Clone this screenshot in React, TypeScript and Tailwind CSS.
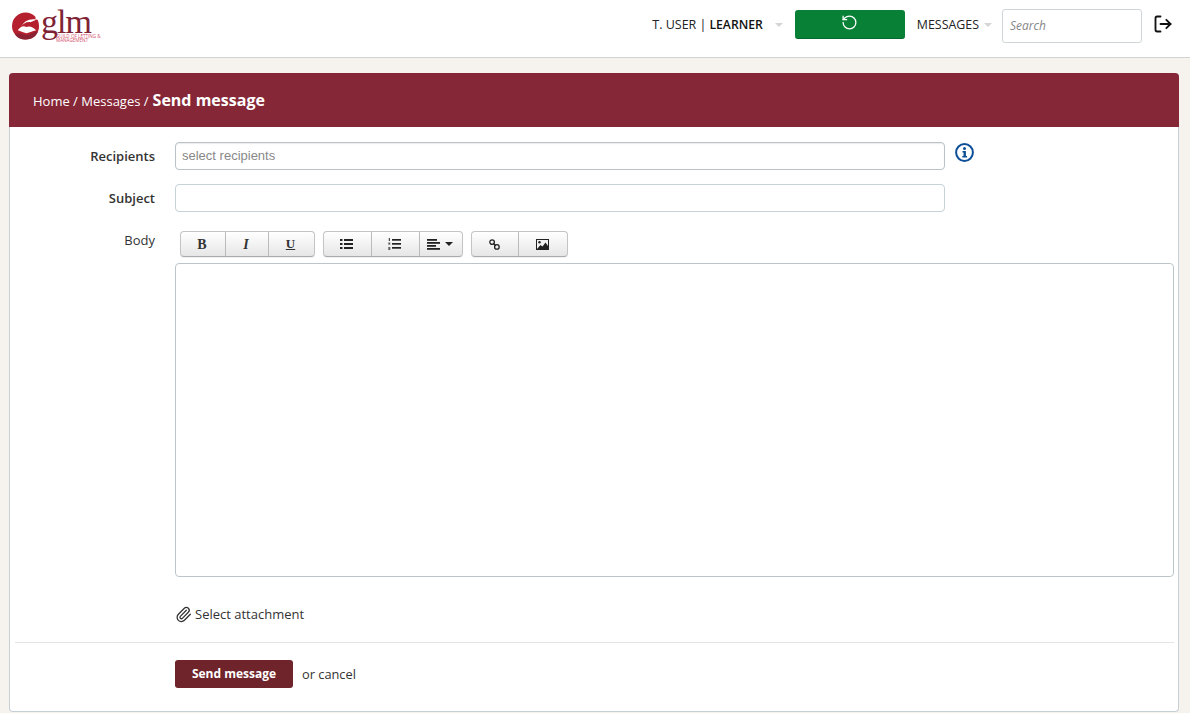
import { LogOut, Paperclip, RotateCcw } from "lucide-react";
import { ReactNode } from "react";

const Logo = () => (
  <div className="flex items-start">
    <svg width="28" height="30" viewBox="0 0 29 31" className="mt-[11px] ml-[12px]">
      <circle cx="14" cy="15.5" r="14" fill="#b5202f" />
      <path d="M25 3 L29 3 L29 9 L23 8.5 C17 8 12 11 9 17 C11 13 15 11 19 11.5 L24 9.5 Z" fill="#ffffff" />
      <path d="M6 20 C9 15.5 12 15 15 16.5 C18 15 22 16.5 25 20 C21 21 19 22 15 23 C11 22 9 21 6 20 Z" fill="#ffffff" />
      <path d="M3 24 C8 22 11 24 15 25 C19 24 23 22 27 21 C25 27 20 29.5 14 29.5 C9 29.5 5 27.5 3 24 Z" fill="#8a2233" />
    </svg>
    <div className="ml-[1px] flex flex-col">
      <span className="mt-[11px] h-[22px] font-['Liberation_Serif',serif] text-[34px] leading-[22px] tracking-[-1px] text-[#7f2234]">
        glm
      </span>
      <div className="ml-[15px] mt-[1px] font-['Open_Sans',sans-serif] text-[4.6px] leading-[4px] text-[#d2526c]">
        <div>GUILD OF LETTING &amp;</div>
        <div>MANAGEMENT</div>
      </div>
    </div>
  </div>
);

const Caret = () => (
  <span className="mt-[14px] h-0 w-0 border-x-[4px] border-t-[4px] border-x-transparent border-t-[#d5d5d5]" />
);

const Header = () => (
  <header className="flex h-[58px] items-start border-b border-[#d3d3d3] bg-white">
    <Logo />
    <div className="ml-auto flex items-start pt-[9px]">
      <span className="text-[12.5px] leading-[31px] text-[#222]">T. USER | </span>
      <span className="ml-[3px] text-[12.2px] font-semibold leading-[31px] text-[#111]">LEARNER</span>
      <span className="ml-[12px] flex">
        <Caret />
      </span>
      <button className="ml-[12px] mt-[1px] flex h-[29px] w-[110px] items-center justify-center rounded-[3px] border-b border-[#06682e] bg-[#088035]">
        <RotateCcw size={17} color="#ffffff" strokeWidth={1.8} className="-mt-[3px]" />
      </button>
      <span className="ml-[12px] text-[12.4px] leading-[31px] text-[#222]">MESSAGES</span>
      <span className="ml-[5px] flex">
        <Caret />
      </span>
      <div className="ml-[10px] flex h-[34px] w-[140px] items-center rounded-[3px] border border-[#cfd6da] px-[7px] text-[12px] italic text-[#888]">
        Search
      </div>
      <LogOut size={20} color="#111" strokeWidth={2.2} className="ml-[11px] mr-[17px] mt-[5px]" />
    </div>
  </header>
);

const Field = ({ label, bold, children }: { label: string; bold?: boolean; children: ReactNode }) => (
  <div className="flex">
    <label
      className={`w-[136px] shrink-0 text-right text-[13px] leading-[18px] text-[#333] ${
        bold ? "pt-[5px] font-semibold" : ""
      }`}
    >
      {label}
    </label>
    <div className="ml-[20px] min-w-0 flex-1">{children}</div>
  </div>
);

const ToolButton = ({ children, width }: { children: ReactNode; width: string }) => (
  <div
    className={`flex h-full items-center justify-center border-r border-[#bbb] pr-[2px] last:border-r-0 ${width}`}
  >
    {children}
  </div>
);

const ToolGroup = ({ children }: { children: ReactNode }) => (
  <div className="flex h-[26px] overflow-hidden rounded-[4px] border border-[#c4c4c4] border-b-[#aaa] bg-gradient-to-b from-white to-[#e6e6e6] shadow-[0_1px_1px_rgba(0,0,0,0.06)]">
    {children}
  </div>
);

const ListIcon = () => (
  <svg width="13" height="10" viewBox="0 0 13 10" fill="#222">
    <rect x="0" y="0" width="2.5" height="2" />
    <rect x="0" y="4" width="2.5" height="2" />
    <rect x="0" y="8" width="2.5" height="2" />
    <rect x="4" y="0" width="9" height="2" />
    <rect x="4" y="4" width="9" height="2" />
    <rect x="4" y="8" width="9" height="2" />
  </svg>
);

const OrderedIcon = () => (
  <svg width="13" height="12" viewBox="0 0 13 12" fill="#222">
    <rect x="0.8" y="0" width="1" height="3" />
    <rect x="0.3" y="4.5" width="2" height="2.2" opacity="0.7" />
    <rect x="0.3" y="9" width="2" height="3" opacity="0.7" />
    <rect x="4" y="1" width="9" height="1.7" />
    <rect x="4" y="5" width="9" height="1.7" />
    <rect x="4" y="9" width="9" height="1.7" />
  </svg>
);

const AlignIcon = () => (
  <svg width="13" height="11" viewBox="0 0 13 11" fill="#222">
    <rect x="0" y="0" width="10" height="1.8" />
    <rect x="0" y="3" width="13" height="1.8" />
    <rect x="0" y="6" width="9" height="1.8" />
    <rect x="0" y="9" width="13" height="1.8" />
  </svg>
);

const ChainIcon = () => (
  <svg width="11" height="11" viewBox="0 0 12 12" fill="none" stroke="#222" strokeWidth="1.4">
    <circle cx="3.4" cy="3.4" r="2.5" />
    <circle cx="8.6" cy="8.6" r="2.5" />
    <path d="M4.6 4.6 L7.4 7.4" />
  </svg>
);

const PictureIcon = () => (
  <svg width="13" height="11" viewBox="0 0 13 11">
    <rect x="0.5" y="0.5" width="12" height="10" fill="#f2f2f2" stroke="#222" />
    <circle cx="3.5" cy="3.2" r="1.2" fill="#222" />
    <path d="M1 10 L4.5 6 L6.5 7.5 L9.5 3.5 L12 7 L12 10 Z" fill="#222" />
  </svg>
);

const InfoIcon = () => (
  <svg width="19" height="19" viewBox="0 0 19 19" className="ml-[10px] mt-[1px]">
    <circle cx="9.5" cy="9.5" r="8.4" fill="none" stroke="#0d4f97" strokeWidth="2" />
    <circle cx="9.5" cy="5.6" r="1.5" fill="#0d4f97" />
    <path d="M7.5 8h3.4v5h1.2v1.6H7.3V13h1.2V9.6h-1z" fill="#0d4f97" />
  </svg>
);

const Toolbar = () => (
  <div className="ml-[5px] flex gap-2">
    <ToolGroup>
      <ToolButton width="w-[45px]">
        <span className="font-['Liberation_Serif',serif] text-[14px] font-bold text-[#333]">B</span>
      </ToolButton>
      <ToolButton width="w-[43px]">
        <span className="font-['Liberation_Serif',serif] text-[14px] font-bold italic text-[#333]">I</span>
      </ToolButton>
      <ToolButton width="w-[45px]">
        <span className="font-['Liberation_Serif',serif] text-[13px] font-bold text-[#333] underline">U</span>
      </ToolButton>
    </ToolGroup>
    <ToolGroup>
      <ToolButton width="w-[48px]">
        <ListIcon />
      </ToolButton>
      <ToolButton width="w-[48px]">
        <OrderedIcon />
      </ToolButton>
      <ToolButton width="w-[42px]">
        <span className="flex items-center gap-[5px]">
          <AlignIcon />
          <span className="h-0 w-0 border-x-[4px] border-t-[4px] border-x-transparent border-t-[#222]" />
        </span>
      </ToolButton>
    </ToolGroup>
    <ToolGroup>
      <ToolButton width="w-[47px]">
        <ChainIcon />
      </ToolButton>
      <ToolButton width="w-[48px]">
        <PictureIcon />
      </ToolButton>
    </ToolGroup>
  </div>
);

const App = () => (
  <div className="h-[713px] overflow-hidden bg-[#f6f2ee] font-['Open_Sans',sans-serif]">
    <Header />
    <main className="ml-[9px] mr-[11px] mt-[15px] h-[639px] rounded-[4px] border border-t-0 border-[#c5d0d6] bg-white">
      <div className="-mx-px flex h-[54px] items-center rounded-t-[4px] bg-[#862737] pl-[24px] text-white">
        <div className="flex items-baseline">
          <span className="text-[13px]">Home / Messages / </span>
          <span className="ml-[4px] text-[16px] font-bold">Send message</span>
        </div>
      </div>

      <div className="pl-[9px] pr-[4px] pt-[15px]">
        <Field label="Recipients" bold>
          <div className="flex items-start">
            <div className="flex h-[28px] w-[770px] items-center rounded-[4px] border border-[#b9c3c7] px-[6px] font-['Liberation_Sans',sans-serif] text-[13px] text-[#888] shadow-[inset_0_1px_1px_rgba(0,0,0,0.08)]">
              select recipients
            </div>
            <InfoIcon />
          </div>
        </Field>
        <div className="mt-[14px]">
          <Field label="Subject" bold>
            <div className="h-[28px] w-[770px] rounded-[4px] border border-[#c5d2d6]" />
          </Field>
        </div>
        <div className="mt-[19px]">
          <Field label="Body">
            <Toolbar />
            <div className="mt-[6px] h-[314px] rounded-[4px] border border-[#bcc6ca]" />
            <div className="mt-[27px] flex items-center gap-[3px] text-[13px] leading-[20px] text-[#333]">
              <Paperclip size={17} color="#333" strokeWidth={1.8} />
              Select attachment
            </div>
          </Field>
        </div>
      </div>

      <div className="ml-[5px] mr-[4px] mt-[18px] border-t border-[#e1e5e6]" />

      <div className="ml-[165px] mt-[17px] flex items-center">
        <button className="h-[28px] w-[118px] rounded-[3px] bg-[#6f232b] text-[12px] font-bold text-white">
          Send message
        </button>
        <span className="ml-[9px] mt-[1px] text-[12.8px] text-[#333]">or cancel</span>
      </div>
    </main>
  </div>
);

export default App;
